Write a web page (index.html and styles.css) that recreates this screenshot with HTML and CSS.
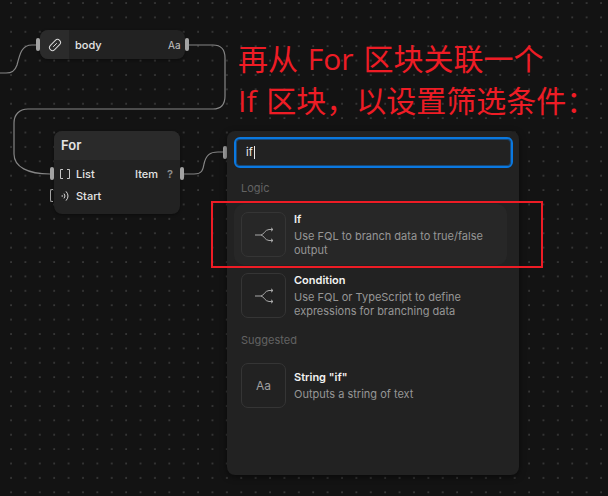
FILE: index.html
```html
<!DOCTYPE html>
<html lang="en">
<head>
    <meta charset="UTF-8">
    <title>For block</title>
    <link rel="stylesheet" href="styles.css">
</head>
<body>
<div class="canvas">

    <!-- wires between the nodes -->
    <svg class="wires" width="608" height="496" fill="none" stroke="#858585" stroke-width="1.2">
        <path d="M0 73 H6 C12 73 15 71 17 65 C20 53 22 45 32 45 H37"/>
        <path d="M189 45 H213 C221 45 225 50 225 58 V96 C225 105 221 109 213 109 H28 C19 109 14 115 14 123 V154 C14 167 28 174 50 174"/>
        <path d="M184 174 H194 C202 174 203 170 204 164 C206 155 210 152 218 152 H223"/>
    </svg>

    <!-- body node -->
    <div class="node body-node">
        <div class="node-icon">
            <svg width="14" height="14" viewBox="0 0 14 14" fill="none" stroke="#d8d8d8" stroke-width="1">
                <rect x="0.5" y="4" width="13" height="6" rx="3" transform="rotate(-45 7 7)"/>
                <path d="M5.2 8.8 8.8 5.2"/>
            </svg>
        </div>
        <span class="node-label">body</span>
        <span class="node-type">Aa</span>
    </div>
    <span class="port" style="left:36px;top:38px"></span>
    <span class="port" style="left:185px;top:38px"></span>

    <!-- for node -->
    <div class="node for-node">
        <div class="for-title">For</div>
        <div class="for-row">
            <span class="row-icon">
                <svg width="10" height="10" viewBox="0 0 10 10" fill="none" stroke="#c8c8c8" stroke-width="1">
                    <path d="M3 .5 H.5 V9.5 H3"/>
                    <path d="M7 .5 H9.5 V9.5 H7"/>
                </svg>
            </span>
            <span class="row-label">List</span>
            <span class="row-right">Item</span>
            <span class="row-help">?</span>
        </div>
        <div class="for-row">
            <span class="row-icon">
                <svg width="9" height="12" viewBox="0 0 9 12" fill="none" stroke="#d8d8d8" stroke-width="1">
                    <path d="M1 5.2 Q2 6 1 6.8"/>
                    <path d="M3 3.6 Q5 6 3 8.4"/>
                    <path d="M5 1.4 Q9 6 5 10.6"/>
                </svg>
            </span>
            <span class="row-label">Start</span>
        </div>
    </div>
    <span class="port" style="left:50px;top:167px"></span>
    <span class="port-open"></span>
    <span class="port" style="left:180px;top:167px"></span>
    <span class="port" style="left:223px;top:146px"></span>

    <!-- search palette -->
    <div class="palette">
        <div class="search">if<span class="caret"></span></div>

        <div class="group-title">Logic</div>
        <div class="item item-active">
            <div class="item-icon">
                <svg width="20" height="16" viewBox="0 0 20 16" fill="none" stroke="#a8a8a8" stroke-width="1">
                    <path d="M1 8 H7 C9.5 8 11 2.5 15 2.5 H19 M17 .8 19 2.5 17 4.2"/>
                    <path d="M7 8 C9.5 8 11 13.5 15 13.5 H19 M17 11.8 19 13.5 17 15.2"/>
                </svg>
            </div>
            <div class="item-text">
                <div class="item-name">If</div>
                <div class="item-desc">Use FQL to branch data to true/false output</div>
            </div>
        </div>
        <div class="item">
            <div class="item-icon">
                <svg width="20" height="16" viewBox="0 0 20 16" fill="none" stroke="#a8a8a8" stroke-width="1">
                    <path d="M1 8 H7 C9.5 8 11 2.5 15 2.5 H19 M17 .8 19 2.5 17 4.2"/>
                    <path d="M7 8 C9.5 8 11 13.5 15 13.5 H19 M17 11.8 19 13.5 17 15.2"/>
                </svg>
            </div>
            <div class="item-text">
                <div class="item-name">Condition</div>
                <div class="item-desc">Use FQL or TypeScript to define expressions for branching data</div>
            </div>
        </div>

        <div class="group-title group-second">Suggested</div>
        <div class="item">
            <div class="item-icon item-icon-text">Aa</div>
            <div class="item-text item-text-short">
                <div class="item-name">String "if"</div>
                <div class="item-desc">Outputs a string of text</div>
            </div>
        </div>
    </div>

    <!-- red annotation on top of the screenshot -->
    <div class="note">再从 For 区块关联一个<br>If 区块，以设置筛选条件：</div>
    <div class="note-box"></div>
</div>
</body>
</html>
```

FILE: styles.css
```css
/* General styling */
body {
    margin: 0;
    background-color: #131313;
    font-family: 'Inter', 'Liberation Sans', sans-serif;
}

/* Free canvas with the dotted grid */
.canvas {
    position: relative;
    width: 608px;
    height: 496px;
    overflow: hidden;
    background-color: #131313;
    background-image: radial-gradient(circle at 1px 1px, #3c3c3c 0.6px, transparent 1px);
    background-size: 14.4px 14.4px;
    background-position: 10px 2px;
}

.wires {
    position: absolute;
    left: 0;
    top: 0;
}

/* Nodes */
.node {
    position: absolute;
    background-color: #222222;
    border-radius: 8px;
    box-shadow: 0 1px 3px rgba(0, 0, 0, 0.4);
    color: #e4e4e4;
    font-size: 11px;
    font-weight: 500;
    overflow: hidden;
}

.body-node {
    left: 40px;
    top: 30px;
    width: 145px;
    height: 29px;
    display: flex;
    align-items: center;
}

.node-icon {
    width: 29px;
    height: 29px;
    background-color: #2b2b2b;
    display: flex;
    align-items: center;
    justify-content: center;
}

.node-label {
    margin-left: 6px;
    flex: 1;
}

.node-type {
    margin-right: 4px;
    font-size: 10px;
    font-weight: 400;
    color: #c4c4c4;
    letter-spacing: 0.3px;
}

.for-node {
    left: 54px;
    top: 131px;
    width: 126px;
    height: 83px;
}

.for-title {
    height: 29px;
    line-height: 28px;
    padding-left: 7px;
    background-color: #2a2a2a;
    font-size: 13px;
    font-weight: 600;
}

.for-row {
    height: 22px;
    display: flex;
    align-items: center;
    padding-left: 6px;
    padding-right: 7px;
}

.for-title + .for-row {
    margin-top: 3px;
}

.row-icon {
    width: 10px;
    margin-right: 6px;
    display: flex;
    justify-content: center;
}

.row-label {
    flex: 1;
}

.row-help {
    margin-left: 9px;
    color: #8f8f8f;
    font-weight: 600;
}

/* Ports */
.port {
    position: absolute;
    width: 4px;
    height: 13px;
    background-color: #a3a3a3;
    border-radius: 2px;
}

.port-open {
    position: absolute;
    left: 50px;
    top: 189px;
    width: 3px;
    height: 13px;
    border: 1px solid #a3a3a3;
    border-right: none;
    border-radius: 2px 0 0 2px;
    box-sizing: border-box;
}

/* Search palette */
.palette {
    position: absolute;
    left: 227px;
    top: 131px;
    width: 292px;
    height: 344px;
    box-sizing: border-box;
    padding: 6px 7px;
    background-color: #222222;
    border-radius: 8px;
    box-shadow: 0 2px 6px rgba(0, 0, 0, 0.5);
}

.search {
    width: 279px;
    height: 31px;
    line-height: 27px;
    box-sizing: border-box;
    padding-left: 10px;
    border: 2px solid #0a78e0;
    box-shadow: inset 0 0 0 1px rgba(10, 120, 224, 0.45);
    border-radius: 6px;
    color: #f0f0f0;
    font-size: 11px;
}

.caret {
    display: inline-block;
    width: 1px;
    height: 13px;
    margin-left: 1px;
    background-color: #e8e8e8;
    vertical-align: -3px;
}

.group-title {
    margin: 13px 0 9px 7px;
    height: 14px;
    line-height: 14px;
    color: #636363;
    font-size: 11px;
}

.group-second {
    margin-top: 7px;
    margin-bottom: 8px;
}

.item {
    width: 273px;
    display: flex;
    box-sizing: border-box;
    padding: 8px 7px;
    gap: 8px;
    border-radius: 10px;
}

.item-active {
    background-color: #272727;
}

.item-icon {
    flex: none;
    width: 45px;
    height: 45px;
    box-sizing: border-box;
    border: 1px solid #353535;
    border-radius: 7px;
    display: flex;
    align-items: center;
    justify-content: center;
}

.item-icon-text {
    color: #a0a0a0;
    font-size: 12px;
}

.item-text {
    width: 205px;
}

.item-text-short {
    padding-top: 7px;
}

.item-name {
    color: #f2f2f2;
    font-size: 11px;
    font-weight: 600;
    line-height: 15px;
    margin-bottom: 2px;
}

.item-desc {
    color: #969696;
    font-size: 11px;
    line-height: 14px;
}

/* Annotation */
.note {
    position: absolute;
    left: 238px;
    top: 38px;
    white-space: nowrap;
    color: #ee1c25;
    font-family: 'Open Sans', 'Noto Sans CJK SC', sans-serif;
    font-size: 30px;
    font-weight: 400;
    line-height: 42px;
    word-spacing: 2px;
}

.note-box {
    position: absolute;
    left: 211px;
    top: 201px;
    width: 332px;
    height: 67px;
    box-sizing: border-box;
    border: 2px solid #ee1c25;
}
```
